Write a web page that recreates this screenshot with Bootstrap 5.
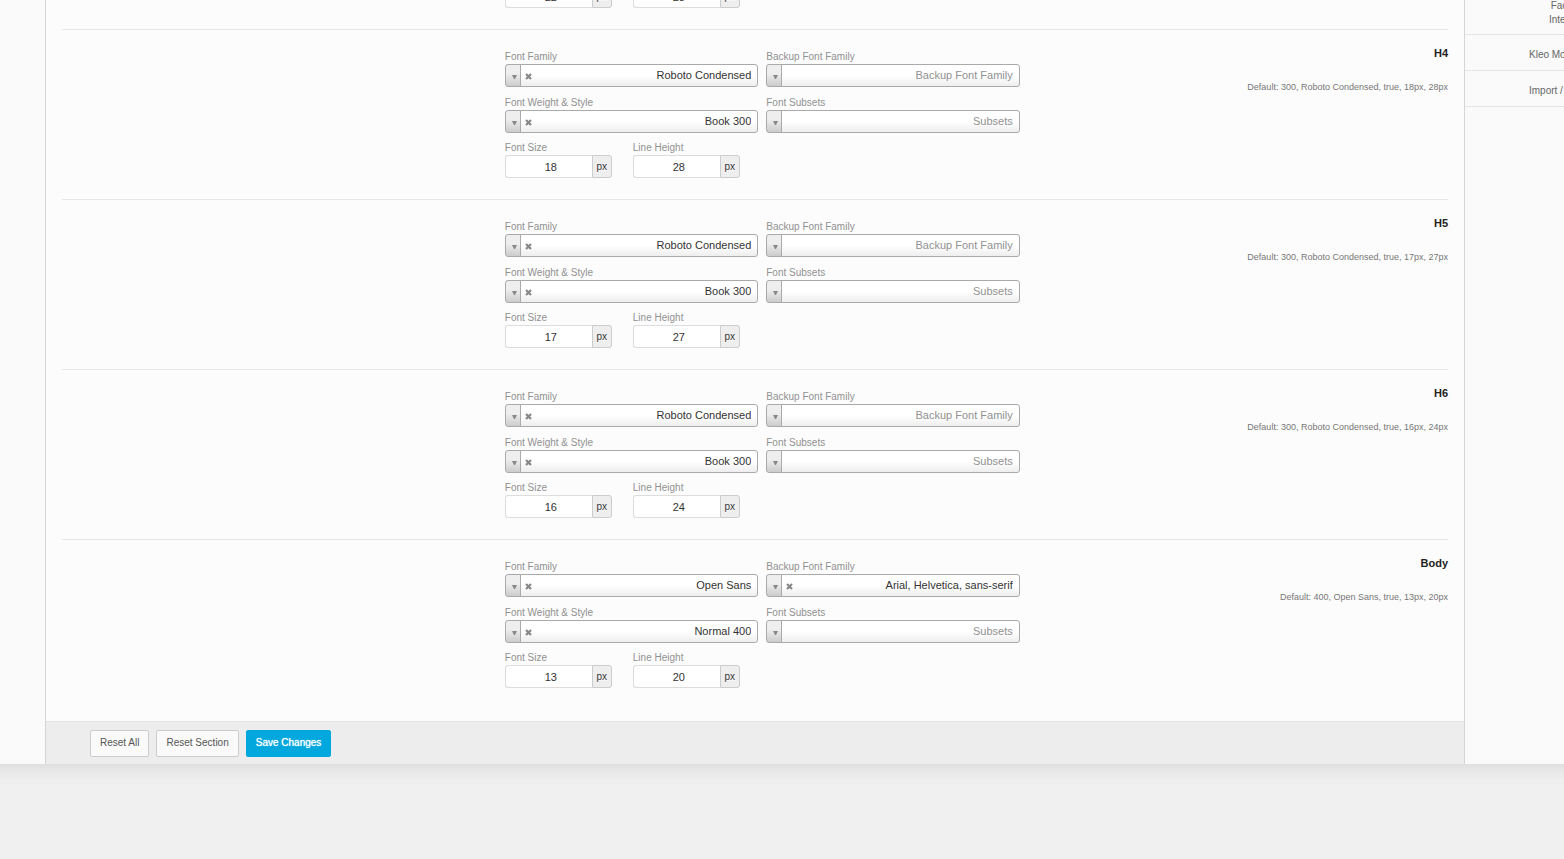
<!DOCTYPE html>
<html lang="en">
<head>
<meta charset="utf-8">
<meta name="viewport" content="width=device-width, initial-scale=1">
<title>Theme Options – Typography</title>
<link href="https://cdn.jsdelivr.net/npm/bootstrap@5.3.0/dist/css/bootstrap.min.css" rel="stylesheet">
<style>
body { background: #f0f0f0; font-family: "Liberation Sans", Arial, sans-serif; font-size: 10px; line-height: 14px; color: #555; overflow-x: hidden; }
.options-shell { background: #fafafa; }
.shell-shade { height: 24px; background: linear-gradient(#dfdfdf, #e8e8e8 30%, #eee 65%, #f0f0f0); }
.gutter { flex: 0 0 45px; }
.options-main { background: #fcfcfc; border: solid #d5d5d5; border-width: 0 1px; min-width: 0; }
.side-menu { flex: 0 0 99px; overflow: hidden; }
.side-menu ul { margin-top: -14px; }
.side-menu li { border-bottom: 1px solid #e5e5e5; }
.side-menu a { display: block; padding: 13px 0 8px 64px; color: #666; text-decoration: none; white-space: nowrap; }
.side-menu .two-line { padding: 13px 0 7px 84px; }
.two-line span { display: block; width: min-content; text-align: center; white-space: normal; }
.fields-area { padding: 0 16px 12px; overflow: hidden; }
.type-row { border-top: 1px solid #e7e7e7; padding: 20px 0 21px; }
.type-row.cut-row { border: 0; padding-top: 0; margin-top: -15px; }
.type-fields { width: 37.15%; margin-left: 31.95%; }
.type-row label { display: block; color: #919191; height: 14px; line-height: 13px; }
.pair { gap: 8px; margin-bottom: 9px; }
.pair + .pair { margin-bottom: 8px; }
.pair > div { flex: 1 1 0; min-width: 0; }
.pick { position: relative; }
.pick select { display: block; appearance: none; width: 100%; height: 23px; border: 1px solid #aaa; border-radius: 3px; padding: 0 6px 1px 30px; font-size: 11px; color: #333; text-align-last: right;
  background: linear-gradient(#aaa,#aaa) 14px 0 / 1px 100% no-repeat, linear-gradient(#eee 40%,#ccc) 0 0 / 14px 100% no-repeat, linear-gradient(#fff 50%,#eee); }
.pick select.blank { color: #919191; }
.pick .caret { position: absolute; left: 7px; top: 11px; width: 5px; height: 4px; pointer-events: none; }
.pick .clear { position: absolute; left: 20px; top: 9px; width: 7px; height: 7px; padding: 0; border: 0; background: none; display: flex; }
.sizes { gap: 21px; }
.size-box { width: 107px; }
.size-box input { width: 87px; height: 23px; border: 1px solid #ddd; border-right: 0; border-radius: 3px 0 0 3px; background: #fff; text-align: center; font-size: 11px; color: #333; padding: 0 0 0 4px; }
.unit { width: 20px; height: 23px; border: 1px solid #ccc; border-radius: 0 3px 3px 0; background: #eee; text-align: center; line-height: 22px; color: #333; text-shadow: 0 1px 0 #fff; }
.type-title { flex: 1; text-align: right; }
.type-title h2 { font-size: 11px; line-height: 14px; font-weight: 700; color: #222; margin: -4px 0 20px; }
.type-title p { font-size: 9px; line-height: 14px; color: #777; margin: 0; }
.action-bar { background: #ededed; border-top: 1px solid #e3e3e3; padding: 8px 0 7px 44px; gap: 7px; }
.action-bar .btn { height: 27px; border-radius: 2px; padding: 0 9px 2px; font-size: 10px; line-height: 14px; --bs-btn-color: #555; --bs-btn-bg: #fafafa; --bs-btn-border-color: #ccc; }
.action-bar .save { --bs-btn-color: #fff; --bs-btn-bg: #00a8dd; --bs-btn-border-color: #00a8dd; text-shadow: 0 0 1px #fff; }
</style>
</head>
<body>
<svg class="d-none" xmlns="http://www.w3.org/2000/svg">
  <symbol id="down" viewBox="0 0 5 4"><path d="M0 0h5L3 4H2z" fill="#888"/></symbol>
  <symbol id="cross" viewBox="0 0 7 7"><path d="M1 1l5 5M6 1L1 6" stroke="#888" stroke-width="2.2"/></symbol>
</svg>
<div class="options-shell d-flex">
  <div class="gutter"></div>
  <main class="options-main flex-grow-1">
    <form>
      <div class="fields-area" id="fields">
        <div class="type-row cut-row">
          <div class="type-fields d-flex sizes">
            <div class="size-box d-flex"><input aria-label="Font Size" value="22"><span class="unit">px</span></div>
            <div class="size-box d-flex"><input aria-label="Line Height" value="28"><span class="unit">px</span></div>
          </div>
        </div>
      </div>
      <div class="action-bar d-flex">
        <button type="button" class="btn">Reset All</button>
        <button type="button" class="btn">Reset Section</button>
        <button type="submit" class="btn save">Save Changes</button>
      </div>
    </form>
  </main>
  <nav class="side-menu">
    <ul class="list-unstyled mb-0">
      <li><a class="two-line" href="#"><span>Facebook Integration</span></a></li>
      <li><a href="#">Kleo Modules</a></li>
      <li><a href="#">Import / Export</a></li>
    </ul>
  </nav>
</div>
<div class="shell-shade"></div>
<script src="https://cdn.jsdelivr.net/npm/bootstrap@5.3.0/dist/js/bootstrap.bundle.min.js"></script>
<script>
const rows = [
  { id: 'h4', name: 'H4', family: 'Roboto Condensed', backup: '', weight: 'Book 300', size: 18, line: 28, std: '300, Roboto Condensed, true, 18px, 28px' },
  { id: 'h5', name: 'H5', family: 'Roboto Condensed', backup: '', weight: 'Book 300', size: 17, line: 27, std: '300, Roboto Condensed, true, 17px, 27px' },
  { id: 'h6', name: 'H6', family: 'Roboto Condensed', backup: '', weight: 'Book 300', size: 16, line: 24, std: '300, Roboto Condensed, true, 16px, 24px' },
  { id: 'body', name: 'Body', family: 'Open Sans', backup: 'Arial, Helvetica, sans-serif', weight: 'Normal 400', size: 13, line: 20, std: '400, Open Sans, true, 13px, 20px' }
];
const pick = (id, label, value, hint) => `<div><label for="${id}">${label}</label><div class="pick">
  <select id="${id}" class="${value ? '' : 'blank'}"><option>${value || hint}</option></select>
  <svg class="caret"><use href="#down"/></svg>
  ${value ? `<button type="button" class="clear" aria-label="Clear"><svg width="7" height="7"><use href="#cross"/></svg></button>` : ''}
</div></div>`;
const size = (id, label, value) => `<div class="size-box"><label for="${id}">${label}</label><div class="d-flex"><input id="${id}" value="${value}"><span class="unit">px</span></div></div>`;
document.getElementById('fields').insertAdjacentHTML('beforeend', rows.map(r => `
<section class="type-row d-flex">
  <div class="type-fields">
    <div class="pair d-flex">${pick(r.id + 'f', 'Font Family', r.family)}${pick(r.id + 'b', 'Backup Font Family', r.backup, 'Backup Font Family')}</div>
    <div class="pair d-flex">${pick(r.id + 'w', 'Font Weight &amp; Style', r.weight)}${pick(r.id + 'u', 'Font Subsets', '', 'Subsets')}</div>
    <div class="sizes d-flex">${size(r.id + 's', 'Font Size', r.size)}${size(r.id + 'l', 'Line Height', r.line)}</div>
  </div>
  <div class="type-title"><h2>${r.name}</h2><p>Default: ${r.std}</p></div>
</section>`).join(''));
</script>
</body>
</html>
